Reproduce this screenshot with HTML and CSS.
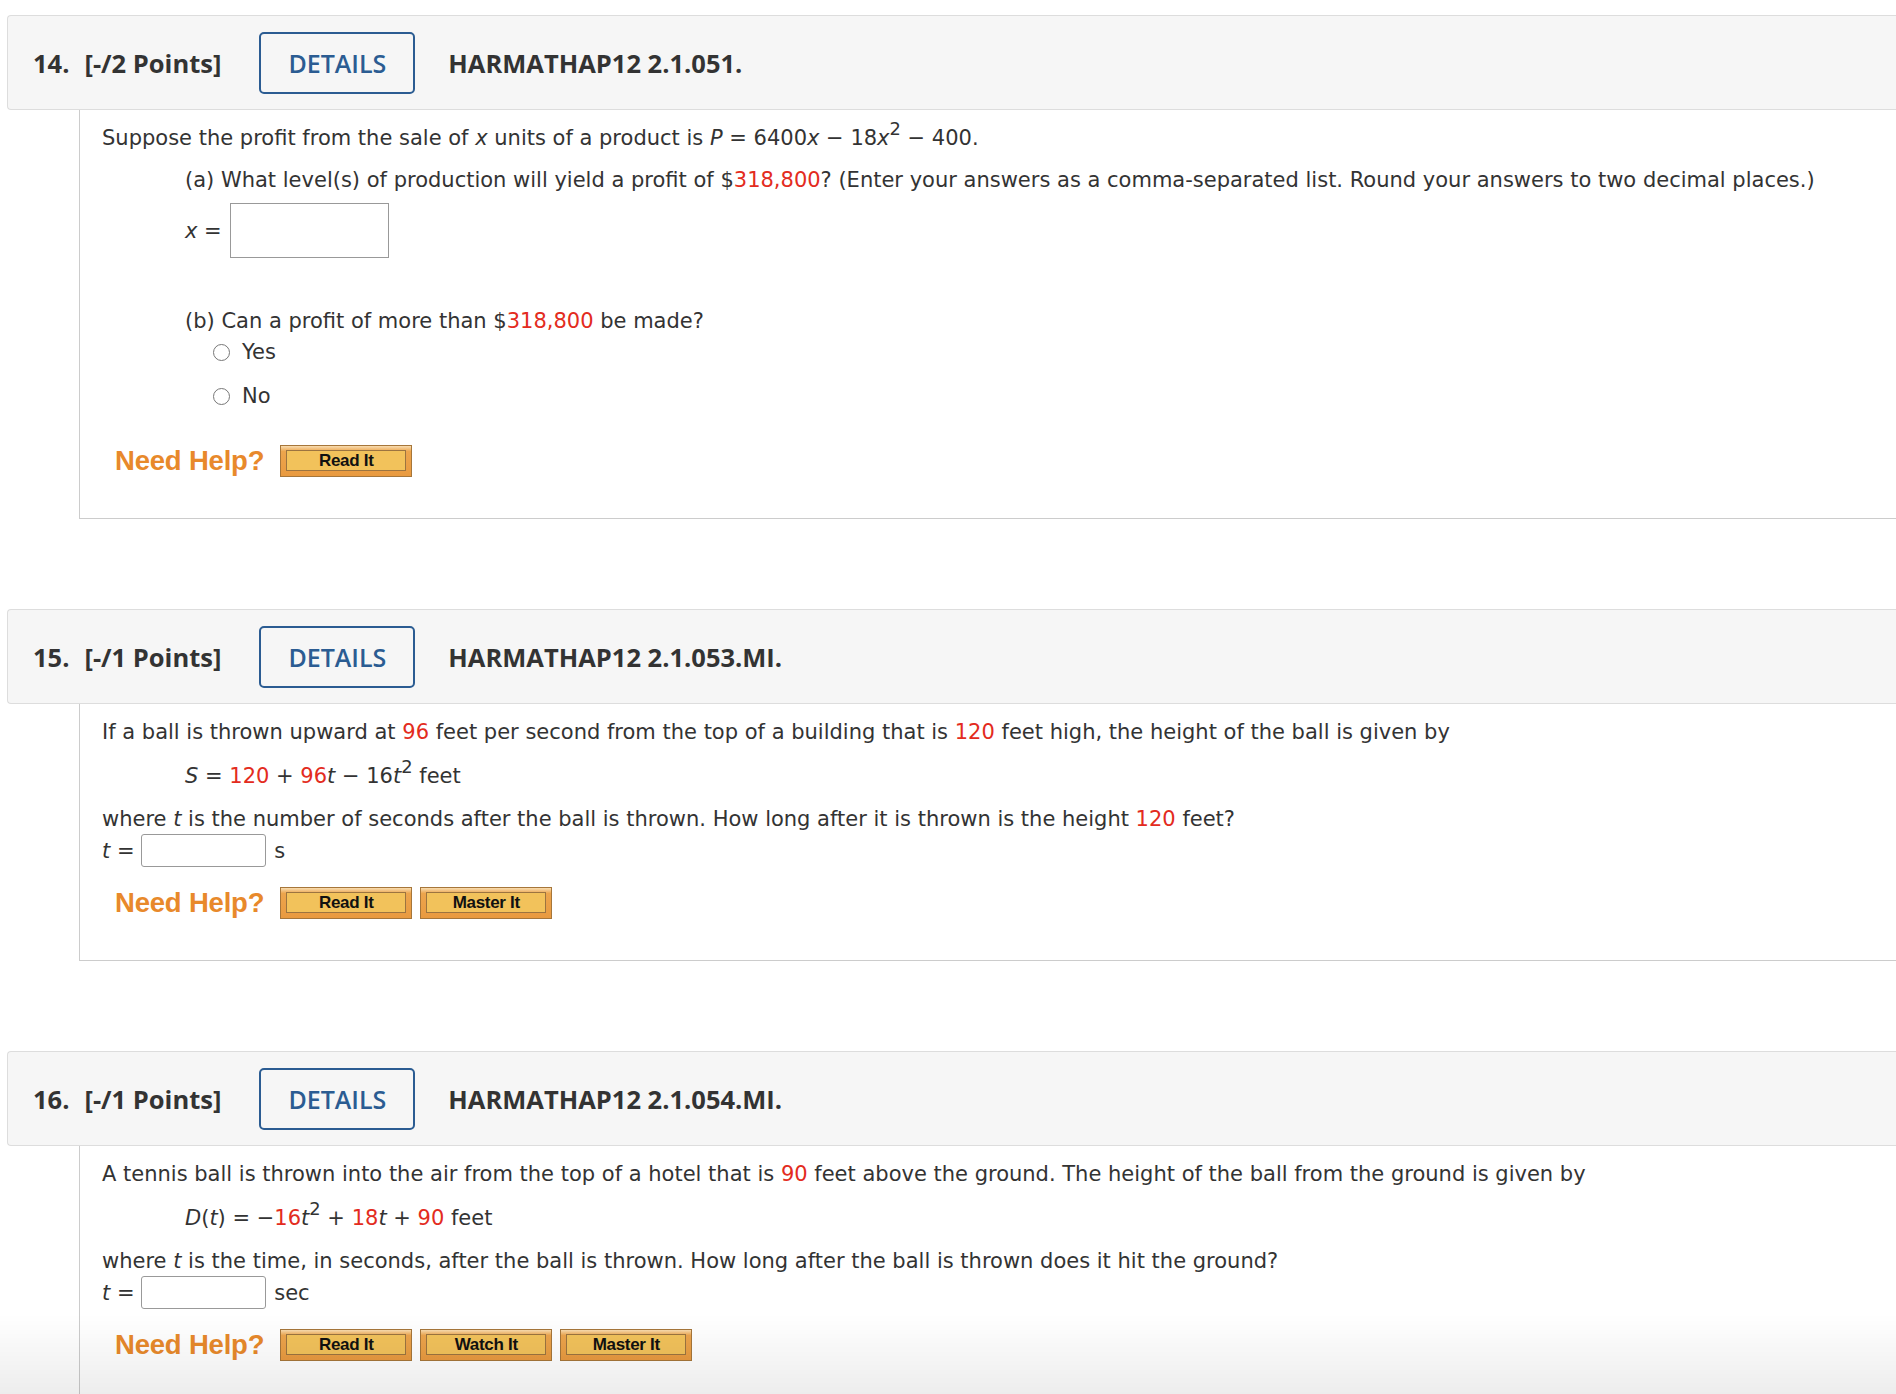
FILE: index.html
```html
<!DOCTYPE html>
<html>
<head>
<meta charset="utf-8">
<link rel="stylesheet" href="styles.css">
</head>
<body>
<div class="page">

  <section class="question q14">
    <div class="qhead">
      <span class="qnum">14.</span>
      <span class="qpts">[-/2 Points]</span>
      <span class="details">DETAILS</span>
      <span class="qid">HARMATHAP12 2.1.051.</span>
    </div>
    <div class="qbody">
      <div class="line first">Suppose the profit from the sale of <i>x</i> units of a product is <i>P</i> = 6400<i>x</i> − 18<i>x</i><sup>2</sup> − 400.</div>
      <div class="line parta">(a) What level(s) of production will yield a profit of $<span class="red">318,800</span>? (Enter your answers as a comma-separated list. Round your answers to two decimal places.)</div>
      <div class="answer ansa"><i>x</i>&nbsp;=&nbsp;<span class="box big"></span></div>
      <div class="line partb">(b) Can a profit of more than $<span class="red">318,800</span> be made?</div>
      <div class="radio"><span class="circle"></span>Yes</div>
      <div class="radio second"><span class="circle"></span>No</div>
      <div class="help">
        <span class="needhelp">Need Help?</span>
        <span class="hbtn"><span class="hin">Read It</span></span>
      </div>
    </div>
  </section>

  <section class="question q15">
    <div class="qhead">
      <span class="qnum">15.</span>
      <span class="qpts">[-/1 Points]</span>
      <span class="details">DETAILS</span>
      <span class="qid">HARMATHAP12 2.1.053.MI.</span>
    </div>
    <div class="qbody">
      <div class="line first">If a ball is thrown upward at <span class="red">96</span> feet per second from the top of a building that is <span class="red">120</span> feet high, the height of the ball is given by</div>
      <div class="line eq"><i>S</i> = <span class="red">120</span> + <span class="red">96</span><i>t</i> − 16<i>t</i><sup>2</sup> feet</div>
      <div class="line where">where <i>t</i> is the number of seconds after the ball is thrown. How long after it is thrown is the height <span class="red">120</span> feet?</div>
      <div class="answer anst"><i>t</i>&nbsp;=&nbsp;<span class="box small"></span><span class="unit">s</span></div>
      <div class="help">
        <span class="needhelp">Need Help?</span>
        <span class="hbtn"><span class="hin">Read It</span></span>
        <span class="hbtn"><span class="hin">Master It</span></span>
      </div>
    </div>
  </section>

  <section class="question q16">
    <div class="qhead">
      <span class="qnum">16.</span>
      <span class="qpts">[-/1 Points]</span>
      <span class="details">DETAILS</span>
      <span class="qid">HARMATHAP12 2.1.054.MI.</span>
    </div>
    <div class="qbody">
      <div class="line first">A tennis ball is thrown into the air from the top of a hotel that is <span class="red">90</span> feet above the ground. The height of the ball from the ground is given by</div>
      <div class="line eq"><i>D</i>(<i>t</i>) = −<span class="red">16</span><i>t</i><sup>2</sup> + <span class="red">18</span><i>t</i> + <span class="red">90</span> feet</div>
      <div class="line where">where <i>t</i> is the time, in seconds, after the ball is thrown. How long after the ball is thrown does it hit the ground?</div>
      <div class="answer anst"><i>t</i>&nbsp;=&nbsp;<span class="box small"></span><span class="unit">sec</span></div>
      <div class="help">
        <span class="needhelp">Need Help?</span>
        <span class="hbtn"><span class="hin">Read It</span></span>
        <span class="hbtn"><span class="hin">Watch It</span></span>
        <span class="hbtn"><span class="hin">Master It</span></span>
      </div>
    </div>
  </section>

</div>
<div class="bottomfade"></div>
</body>
</html>
```

FILE: styles.css
```css
html, body {
  margin: 0;
  padding: 0;
  background: #ffffff;
}

body {
  font-family: "DejaVu Sans", Verdana, sans-serif;
  font-size: 21px;
  color: #333333;
  overflow: hidden;
}

.page {
  padding: 15px 0 0 7px;
}

.question + .question {
  margin-top: 90px;
}

.qhead {
  height: 93px;
  background: #f6f6f6;
  border: 1px solid #dddddd;
  border-right: none;
  border-radius: 4px 0 0 4px;
  display: flex;
  align-items: center;
  padding-left: 25px;
  font-family: "Open Sans", "DejaVu Sans", sans-serif;
  font-size: 25.5px;
  font-weight: 700;
  color: #333333;
}

.qpts {
  margin-left: 15px;
}

.details {
  margin-left: 38px;
  width: 152px;
  height: 58px;
  border: 2.5px solid #2b5c92;
  border-radius: 5px;
  display: flex;
  align-items: center;
  justify-content: center;
  color: #2b5c92;
  font-weight: 600;
  font-size: 25px;
}

.qid {
  margin-left: 33px;
}

.qbody {
  margin-left: 72px;
  border-left: 1px solid #cccccc;
  border-bottom: 1px solid #cccccc;
  padding: 6px 0 41px 22px;
}

.line {
  line-height: 44px;
  white-space: nowrap;
}

.red {
  color: #e32b20;
}

sup {
  font-size: 0.85em;
  line-height: 0;
  vertical-align: 0.55em;
}

.parta {
  margin-left: 83px;
  line-height: 40px;
}

.answer {
  display: flex;
  align-items: center;
}

.ansa {
  margin: 3px 0 0 83px;
}

.box {
  display: inline-block;
  background: #fff;
  border: 1px solid #999999;
}

.box.big {
  width: 157px;
  height: 53px;
  margin-left: 2px;
}

.box.small {
  width: 123px;
  height: 31px;
  border-radius: 3px;
}

.unit {
  margin-left: 8px;
}

.partb {
  margin: 48px 0 0 83px;
  line-height: 30px;
}

.radio {
  margin-left: 111px;
  height: 32px;
  display: flex;
  align-items: center;
}

.radio.second {
  margin-top: 12px;
}

.circle {
  width: 15px;
  height: 15px;
  border: 1.5px solid #777777;
  border-radius: 50%;
  margin-right: 12px;
  background: #fff;
}

.eq {
  margin-left: 83px;
}

.where {
  margin-top: 6px;
  line-height: 30px;
}

.help {
  display: flex;
  align-items: center;
  margin-left: 13px;
}

.q14 .help {
  margin-top: 33px;
}

.q15 .help,
.q16 .help {
  margin-top: 20px;
}

.needhelp {
  font-family: "Liberation Sans", Arial, sans-serif;
  font-size: 27.5px;
  font-weight: 700;
  color: #e8892b;
  margin-right: 16px;
  letter-spacing: -0.2px;
}

.hbtn {
  box-sizing: border-box;
  width: 132px;
  height: 32px;
  border: 1px solid #a6763a;
  background: linear-gradient(to bottom, #f8dcb0 0%, #eca54d 18%, #e99a40 100%);
  padding: 4px 5px 5px 5px;
  display: flex;
}

.hbtn + .hbtn {
  margin-left: 8px;
}

.hin {
  flex: 1;
  border: 1px solid #9c7440;
  background: #f2c25b;
  display: flex;
  align-items: center;
  justify-content: center;
  font-family: "Liberation Sans", Arial, sans-serif;
  font-weight: 700;
  font-size: 17px;
  letter-spacing: -0.3px;
  color: #111111;
}

.bottomfade {
  position: fixed;
  left: 0;
  right: 0;
  bottom: 0;
  height: 80px;
  pointer-events: none;
  background: linear-gradient(to bottom, rgba(0,0,0,0) 0%, rgba(0,0,0,0.07) 100%);
}
```
